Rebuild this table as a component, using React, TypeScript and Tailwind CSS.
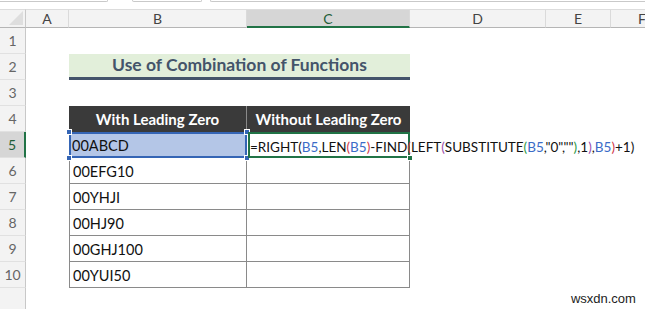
import React from "react";

const FONT = { fontFamily: "Lato, 'Open Sans', sans-serif" };

const rowH = "h-[26px]";

function RowHead({ n, selected }: { n?: number; selected?: boolean }) {
  return (
    <div
      className={`${rowH} flex items-center justify-center text-[14px] border-b border-[#e1e1e1] ${
        selected
          ? "bg-[#d6d6d6] text-[#1e5e38] border-r-2 border-r-[#217346]"
          : "bg-[#f3f3f3] text-[#666] border-r border-r-[#c8c8c8]"
      }`}
    >
      {n}
    </div>
  );
}

const Blank = () => <div className={rowH} />;

function Formula() {
  const blue = "text-[#3b6cc7]";
  const red = "text-[#d0384a]";
  const purple = "text-[#9a4fb0]";
  const green = "text-[#2e9a48]";
  return (
    <span className="whitespace-nowrap text-[13.5px] text-[#111]">
      =RIGHT(<span className={blue}>B5</span>,LEN<span className={red}>(</span>
      <span className={blue}>B5</span>
      <span className={red}>)</span>-FIND<span className={red}>(</span>LEFT
      <span className={purple}>(</span>SUBSTITUTE<span className={green}>(</span>
      <span className={blue}>B5</span>,"0",""<span className={green}>)</span>,1
      <span className={purple}>)</span>,<span className={blue}>B5</span>
      <span className={red}>)</span>+1)
    </span>
  );
}

function DataRow({ n, v }: { n: number; v: string }) {
  return (
    <>
      <RowHead n={n} />
      <Blank />
      <div className={`${rowH} flex items-center pl-[3px] pt-[2px] text-[14.5px] text-[#111] border-l border-b border-r border-[#8a8a8a]`}>
        {v}
      </div>
      <div className={`${rowH} border-b border-r border-[#8a8a8a]`} />
      <Blank />
      <Blank />
      <Blank />
    </>
  );
}

export default function App() {
  const cols = ["A", "B", "C", "D", "E", "F"];
  return (
    <div className="w-[645px] h-[309px] bg-white overflow-hidden" style={FONT}>
      {/* top strip (remains of formula bar) */}
      <div className="h-[9px] flex items-start gap-0 bg-white">
        <div className="w-[108px] h-[2px] border-b border-r border-[#c9c9c9] rounded-br-[4px]" />
        <div className="ml-[24px] w-[70px] h-[2px] border-b border-l border-r border-[#c9c9c9] rounded-b-[4px]" />
        <div className="ml-[8px] flex-1 h-[2px] border-b border-l border-[#c9c9c9] rounded-bl-[4px]" />
      </div>
      <div className="grid grid-cols-[26px_43px_178px_163px_136px_65px_1fr]">
        {/* column headers */}
        <div className="h-[19px] bg-[#f3f3f3] border-t border-[#dcdcdc] border-r border-r-[#c8c8c8] border-b border-b-[#b5b5b5] flex items-end justify-end p-[2px]">
          <svg width="14" height="14" viewBox="0 0 14 14">
            <polygon points="14,0 14,14 0,14" fill="#dedede" />
          </svg>
        </div>
        {cols.map((c) => (
          <div
            key={c}
            className={`h-[19px] flex items-center justify-center text-[14px] border-t border-[#dcdcdc] border-r border-r-[#dadada] ${
              c === "C"
                ? "bg-[#d6d6d6] text-[#1e5e38] border-b-2 border-b-[#217346]"
                : "bg-[#f3f3f3] text-[#444] border-b border-b-[#b5b5b5]"
            } ${c === "F" ? "justify-start pl-[27px]" : ""}`}
          >
            {c}
          </div>
        ))}

        {/* row 1 */}
        <RowHead n={1} />
        <Blank />
        <Blank />
        <Blank />
        <Blank />
        <Blank />
        <Blank />

        {/* row 2 title */}
        <RowHead n={2} />
        <Blank />
        <div className={`${rowH} col-span-2 bg-[#e2efda] border-b-[3px] border-[#44546a] flex items-center justify-center text-[17.5px] font-bold text-[#44546a]`}>
          Use of Combination of Functions
        </div>
        <Blank />
        <Blank />
        <Blank />

        {/* row 3 */}
        <RowHead n={3} />
        <Blank />
        <Blank />
        <Blank />
        <Blank />
        <Blank />
        <Blank />

        {/* row 4 header */}
        <RowHead n={4} />
        <Blank />
        <div className={`${rowH} bg-[#3a3a3a] border-r border-[#8a8a8a] flex items-center justify-center text-white font-bold text-[15px]`}>
          With Leading Zero
        </div>
        <div className={`${rowH} bg-[#3a3a3a] flex items-center justify-center text-white font-bold text-[15px]`}>
          Without Leading Zero
        </div>
        <Blank />
        <Blank />
        <Blank />

        {/* row 5 */}
        <RowHead n={5} selected />
        <Blank />
        <div className={`${rowH} relative bg-[#b4c6e7] flex items-center pl-[3px] pt-[2px] text-[14.5px] text-[#111]`}>
          00ABCD
          <div className="absolute inset-0 border-2 border-[#3565b5]" />
          <div className="absolute -left-[3px] -top-[3px] w-[6px] h-[6px] bg-[#3565b5] border border-white" />
          <div className="absolute -right-[3px] -top-[3px] w-[6px] h-[6px] bg-[#3565b5] border border-white" />
          <div className="absolute -left-[3px] -bottom-[3px] w-[6px] h-[6px] bg-[#3565b5] border border-white" />
          <div className="absolute -right-[3px] -bottom-[3px] w-[6px] h-[6px] bg-[#3565b5] border border-white" />
        </div>
        <div className={`${rowH} relative flex items-center pl-[3px] pt-[2px] z-10`}>
          <div className="absolute top-0 bottom-0 left-[1px] right-0 border-2 border-[#217346]" />
          <div className="absolute -right-[3px] -bottom-[3px] w-[6px] h-[6px] bg-[#217346] border border-white" />
          <div className="relative">
            <Formula />
          </div>
        </div>
        <Blank />
        <Blank />
        <Blank />

        <DataRow n={6} v="00EFG10" />
        <DataRow n={7} v="00YHJI" />
        <DataRow n={8} v="00HJ90" />
        <DataRow n={9} v="00GHJ100" />
        <DataRow n={10} v="00YUI50" />

        {/* row 11 partial */}
        <div className="h-[26px] bg-[#f3f3f3] border-r border-[#c8c8c8]" />
        <div className="h-[26px] col-span-5" />
        <div className="h-[26px] relative">
          <span
            className="absolute right-[11px] top-[1px] text-[13px] text-[#222]"
            style={{ fontFamily: "'Liberation Sans', Arial, sans-serif" }}
          >
            wsxdn.com
          </span>
        </div>
      </div>
    </div>
  );
}
